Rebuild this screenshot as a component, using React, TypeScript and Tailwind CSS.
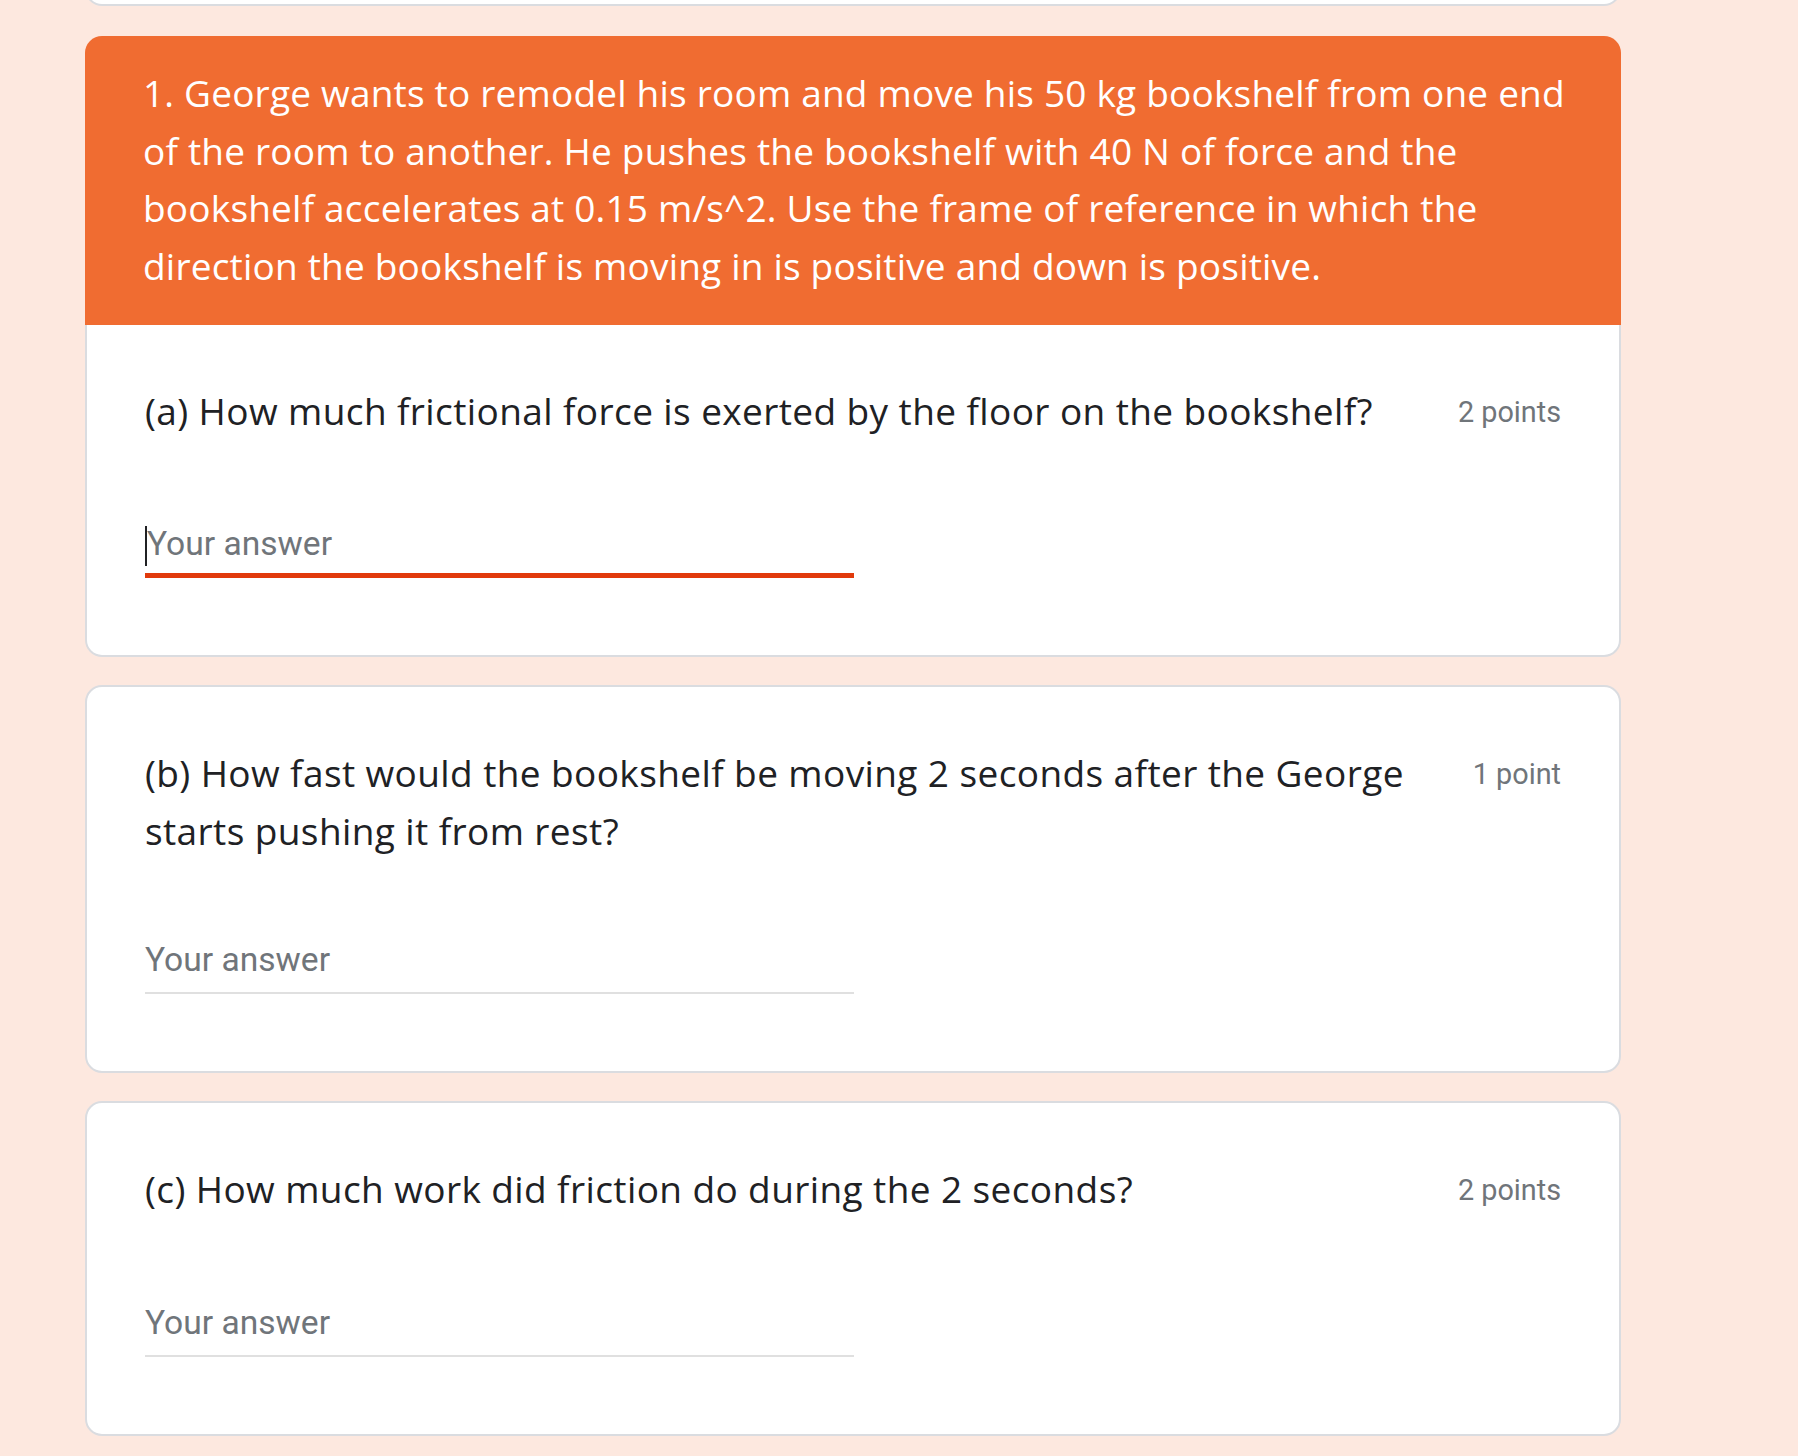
const sans = "font-['Open_Sans','Liberation_Sans',sans-serif]"
const roboto = "font-['Roboto','Liberation_Sans',sans-serif]"

type Question = {
  lines: string[]
  points: string
  gap: string
  focused?: boolean
}

const header = [
  '1. George wants to remodel his room and move his 50 kg bookshelf from one end',
  'of the room to another. He pushes the bookshelf with 40 N of force and the',
  'bookshelf accelerates at 0.15 m/s^2. Use the frame of reference in which the',
  'direction the bookshelf is moving in is positive and down is positive.',
]

const questions: Question[] = [
  {
    lines: ['(a) How much frictional force is exerted by the floor on the bookshelf?'],
    points: '2 points',
    gap: 'mt-[82px]',
    focused: true,
  },
  {
    lines: ['(b) How fast would the bookshelf be moving 2 seconds after the George', 'starts pushing it from rest?'],
    points: '1 point',
    gap: 'mt-[81px]',
  },
  {
    lines: ['(c) How much work did friction do during the 2 seconds?'],
    points: '2 points',
    gap: 'mt-[83px]',
  },
]

function QuestionBody({ q }: { q: Question }) {
  return (
    <div className="px-[58px] pt-[57px] pb-[77px]">
      <div className="flex items-start">
        <div className={`flex-1 text-[37px] leading-[57.6px] tracking-[0.4px] text-[#202124] ${sans}`}>
          {q.lines.map((l, i) => (
            <div key={i} className="whitespace-nowrap">
              {l}
            </div>
          ))}
        </div>
        <div className={`shrink-0 pl-[58px] pt-[2px] text-[28.8px] leading-[57.6px] text-[#70757a] ${roboto}`}>
          {q.points}
        </div>
      </div>
      <div className={`${q.gap} w-[709px]`}>
        <div className="relative h-[52px]">
          <div className={`text-[33.6px] leading-[40px] text-[#70757a] ${q.focused ? 'pl-[2px]' : ''} ${roboto}`}>
            Your answer
          </div>
          {q.focused && <span className="absolute left-0 top-[2px] h-[40px] w-[2px] bg-[#202124]" />}
        </div>
        <div className="relative h-[2px] bg-[#e0e0e0]">
          {q.focused && <div className="absolute left-0 right-0 bottom-0 h-[5px] bg-[#e13a0c]" />}
        </div>
      </div>
    </div>
  )
}

export default function App() {
  const [first, ...rest] = questions
  return (
    <div className="min-h-screen w-full bg-[#fde8df]">
      <div className="ml-[85px] w-[1536px] flex flex-col pb-[40px]">
        {/* tail of the previous card */}
        <div className="h-[6px] overflow-hidden flex flex-col justify-end">
          <div className="h-[40px] shrink-0 rounded-b-[17px] border-2 border-t-0 border-[#dadce0] bg-white" />
        </div>

        <div className="mt-[30px]">
          <div
            className={`rounded-t-[17px] bg-[#f06c31] px-[58px] pt-[28px] pb-[31px] text-[37px] leading-[57.6px] tracking-[0.2px] text-white ${sans}`}
          >
            {header.map((l, i) => (
              <div key={i} className="whitespace-nowrap">
                {l}
              </div>
            ))}
          </div>
          <div className="rounded-b-[17px] border-2 border-t-0 border-[#dadce0] bg-white">
            <QuestionBody q={first} />
          </div>
        </div>

        {rest.map((q, i) => (
          <div key={i} className="mt-[28px] rounded-[17px] border-2 border-[#dadce0] bg-white">
            <QuestionBody q={q} />
          </div>
        ))}
      </div>
    </div>
  )
}
